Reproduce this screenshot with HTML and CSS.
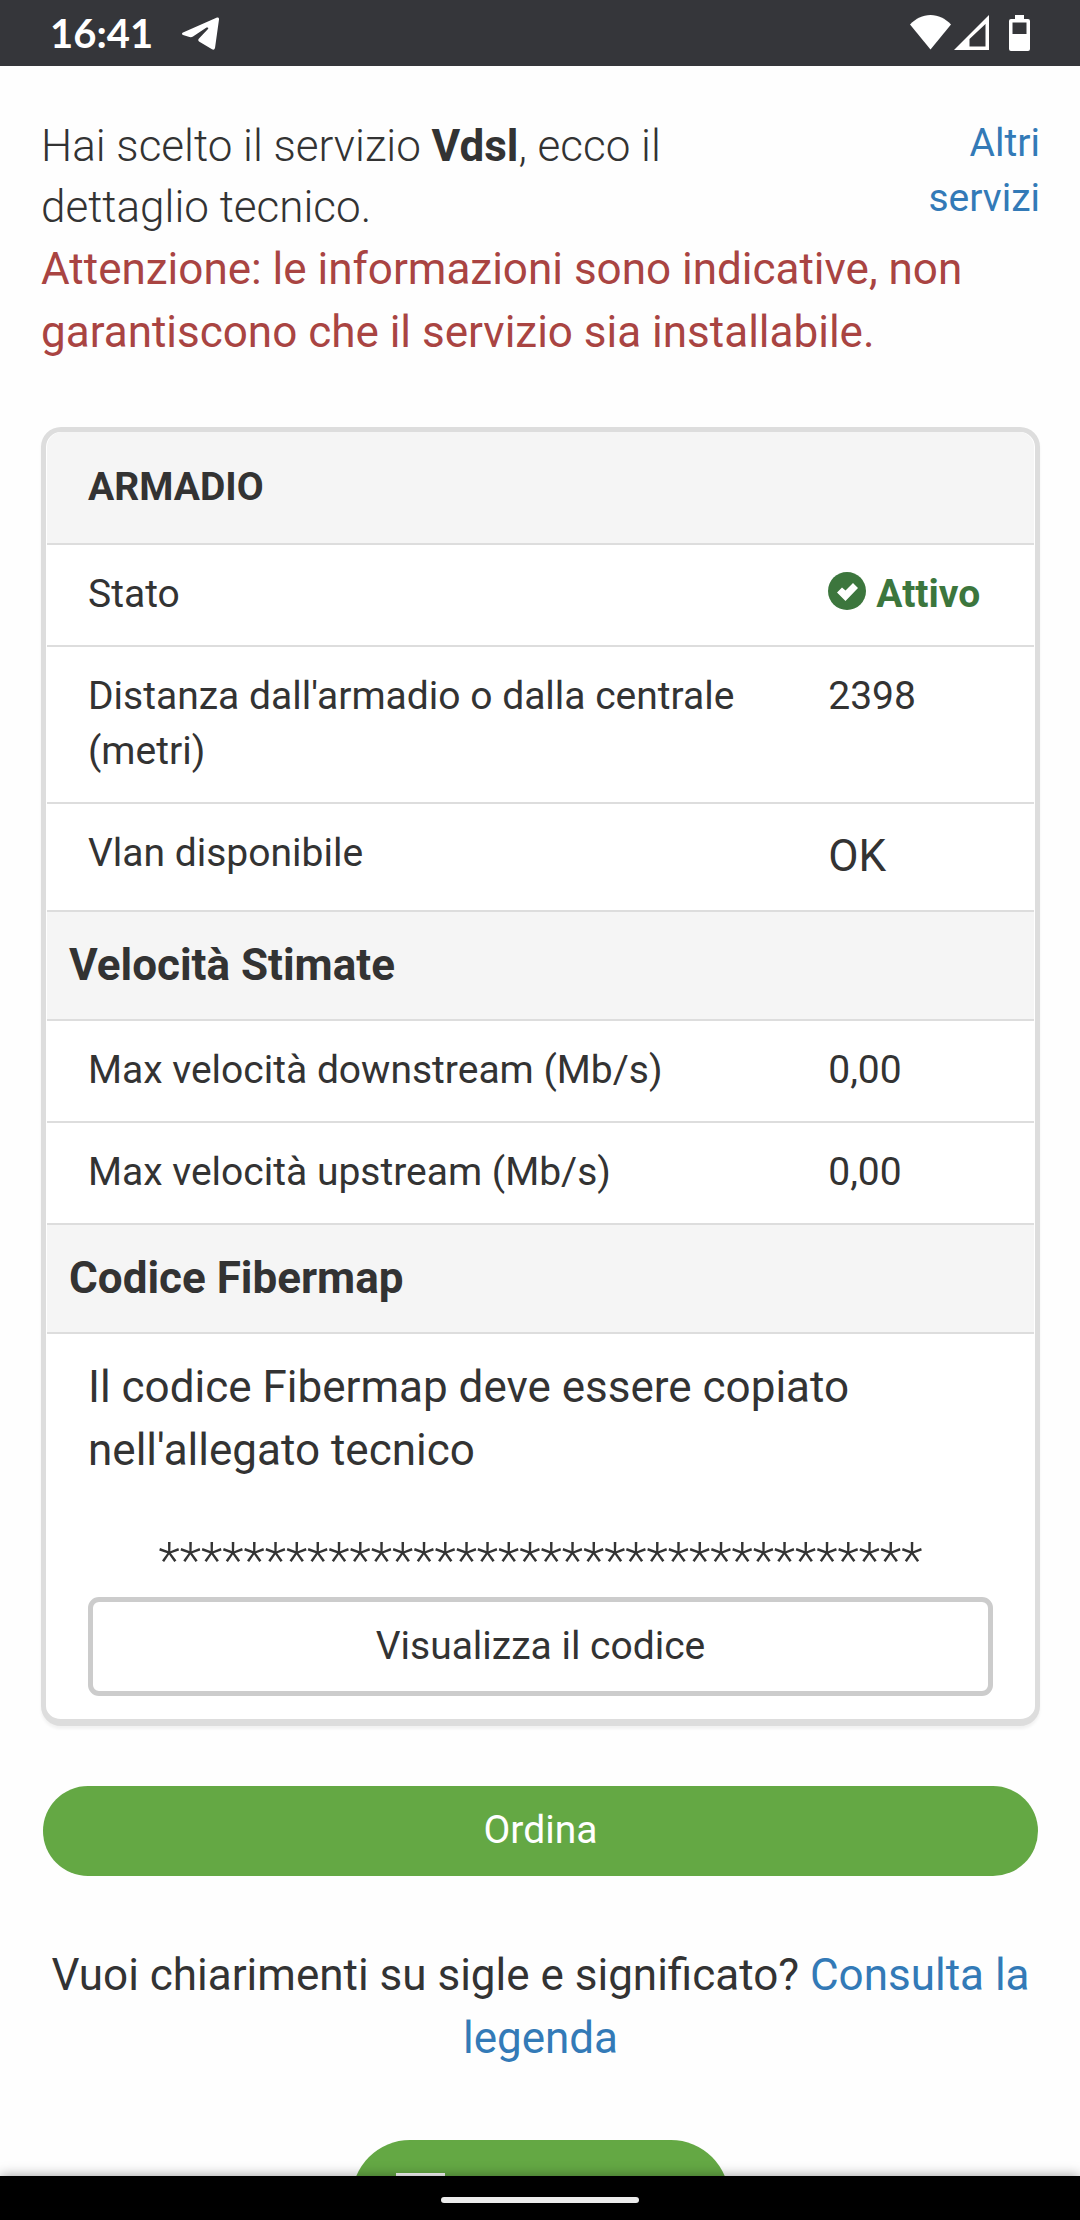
FILE: index.html
```html
<!DOCTYPE html>
<html lang="it">
<head>
    <meta charset="utf-8">
    <meta name="viewport" content="width=device-width, initial-scale=1">
    <title>Dettaglio servizio Vdsl</title>
    <link rel="stylesheet" href="styles.css">
</head>
<body>
    <div class="status-bar">
        <span class="clock">16:41</span>
        <svg class="telegram" width="37" height="33" viewBox="0 0 37 33" fill="#fff">
            <path d="M1 15.500L35 .5Q37.200 0 37 2.500L33 31Q32.300 33.500 30 32.300L17 24.500Q15.500 23 17 21.500L26 12Q27 10 24.500 10.500L11 19.500Q9.500 20.500 7.500 20L1 18Q-1 16.500 1 15.500Z"/>
        </svg>
        <div class="status-icons">
            <svg width="41" height="35" viewBox="0 0 41 35" fill="#fff">
                <path d="M20.500 34.500L0 9.500C6 3.500 12.500 0 20.500 0S35 3.500 41 9.500Z"/>
            </svg>
            <svg width="35" height="35" viewBox="0 0 35 35" fill="#fff">
                <path fill-rule="evenodd" d="M0 35L35 0V35ZM15.500 24V31.500H31.500V9Z"/>
            </svg>
            <svg class="battery" width="21" height="36" viewBox="0 0 21 36" fill="#fff">
                <path fill-rule="evenodd" d="M6 0H15V4H19Q21 4 21 6V34Q21 36 19 36H2Q0 36 0 34V6Q0 4 2 4H6ZM3.500 7.500V19H17.500V7.500Z"/>
            </svg>
        </div>
    </div>

    <main class="content">
        <div class="intro">
            <h1>Hai scelto il servizio <strong>Vdsl</strong>, ecco il dettaglio tecnico.</h1>
            <a href="#servizi">Altri servizi</a>
        </div>
        <p class="warning">Attenzione: le informazioni sono indicative, non garantiscono che il servizio sia installabile.</p>

        <div class="panel">
            <h2>ARMADIO</h2>
            <table>
                <tr>
                    <td class="label">Stato</td>
                    <td class="active">
                        <svg width="38" height="38" viewBox="0 0 38 38">
                            <circle cx="19" cy="19" r="19" fill="#3c763d"/>
                            <path d="M9 20.500L14 15.500L17.500 18.500L25 11L30 16L17.500 29Z" fill="#fff"/>
                        </svg>
                        <strong>Attivo</strong>
                    </td>
                </tr>
                <tr>
                    <td>Distanza dall'armadio o dalla centrale (metri)</td>
                    <td>2398</td>
                </tr>
                <tr>
                    <td>Vlan disponibile</td>
                    <td class="big">OK</td>
                </tr>
                <tr>
                    <th colspan="2">Velocità Stimate</th>
                </tr>
                <tr>
                    <td>Max velocità downstream (Mb/s)</td>
                    <td>0,00</td>
                </tr>
                <tr>
                    <td>Max velocità upstream (Mb/s)</td>
                    <td>0,00</td>
                </tr>
                <tr>
                    <th colspan="2">Codice Fibermap</th>
                </tr>
            </table>
            <div class="fibermap">
                <p>Il codice Fibermap deve essere copiato nell'allegato tecnico</p>
                <div class="code">************************************</div>
                <button type="button" class="show-code">Visualizza il codice</button>
            </div>
        </div>

        <button type="button" class="order">Ordina</button>

        <p class="legend">Vuoi chiarimenti su sigle e significato? <a href="#legenda">Consulta la legenda</a></p>

        <button type="button" class="contact" aria-label="Contatti">
            <svg width="49" height="50" viewBox="0 0 49 50" fill="none" stroke="#fff" stroke-width="4">
                <rect x="2" y="2" width="45" height="46"/>
            </svg>
        </button>
    </main>

    <div class="nav-bar">
        <div class="handle"></div>
    </div>
</body>
</html>
```
FILE: styles.css
```css
* {
    box-sizing: border-box;
}

body {
    margin: 0;
    height: 100vh;
    display: flex;
    flex-direction: column;
    font-family: Roboto, sans-serif;
    font-size: 44px;
    line-height: 63px;
    color: #333;
    background-color: #fefefe;
    overflow: hidden;
}

h1, h2, p {
    margin: 0;
}

a {
    color: #337ab7;
    text-decoration: none;
}

strong {
    font-weight: 700;
}

button {
    display: block;
    font-family: inherit;
    font-size: 39px;
    line-height: 55px;
    cursor: pointer;
}

/* phone status bar */
.status-bar {
    flex: none;
    height: 66px;
    padding: 0 50px;
    display: flex;
    align-items: center;
    background-color: #35363a;
    color: white;
}

.clock {
    font-family: Lato, sans-serif;
    font-size: 40px;
    font-weight: bold;
}

.telegram {
    margin-left: 29px;
}

.status-icons {
    margin-left: auto;
    display: flex;
    gap: 3px;
}

.battery {
    margin-left: 17px;
}

.content {
    flex: 1;
    min-height: 0;
    overflow: hidden;
    padding: 50px 40px 0 41px;
}

.intro {
    display: flex;
    justify-content: space-between;
}

.intro h1 {
    width: 66%;
    font-size: 44px;
    line-height: 61px;
    font-weight: 300;
}

.intro a {
    width: 120px;
    font-size: 39px;
    line-height: 55px;
    text-align: right;
}

.warning {
    color: #a94442;
}

.panel {
    margin-top: 63px;
    padding: 0 1px;
    border: 5px solid #ddd;
    border-bottom-width: 7px;
    border-radius: 20px;
    background-color: white;
    box-shadow: 0 3px 3px rgba(0, 0, 0, 0.05);
}

.panel h2 {
    padding: 28px 41px;
    font-size: 39px;
    line-height: 55px;
    background-color: #f5f5f5;
    border-radius: 15px 15px 0 0;
}

table {
    width: 100%;
    border-collapse: separate;
    border-spacing: 0;
}

td, th {
    border-top: 2px solid #ddd;
    vertical-align: top;
    text-align: left;
}

td {
    padding: 22px 41px 23px;
    font-size: 39px;
    line-height: 55px;
}

th {
    padding: 22px;
    background-color: #f5f5f5;
}

.label {
    width: 75%;
}

.big {
    font-size: 44px;
    line-height: 61px;
}

.active {
    display: flex;
    gap: 10px;
    color: #3c763d;
}

.active svg {
    flex: none;
    margin-top: 5px;
}

.fibermap {
    padding: 22px 41px 23px;
    border-top: 2px solid #ddd;
}

.code {
    margin-top: 48px;
    margin-bottom: 4px;
    font-size: 50px;
    font-weight: 300;
    text-align: center;
    white-space: nowrap;
}

.show-code {
    width: 100%;
    padding: 17px;
    border: 5px solid #ccc;
    border-radius: 11px;
    background-color: white;
    color: #333;
}

.order {
    width: calc(100% - 4px);
    margin: 60px 2px 68px;
    padding: 17px 18px 18px;
    border: none;
    border-radius: 45px;
    background-color: #64a844;
    color: white;
}

.legend {
    text-align: center;
}

.contact {
    margin: 70px auto 0;
    width: 377px;
    height: 116px;
    padding: 0 44px;
    border: none;
    border-radius: 58px;
    background-color: #64a844;
}

.contact svg {
    display: block;
}

/* phone navigation bar */
.nav-bar {
    flex: none;
    height: 44px;
    display: flex;
    align-items: center;
    justify-content: center;
    background-color: black;
    box-shadow: 0 0 12px rgba(0, 0, 0, 0.4);
    z-index: 1;
}

.handle {
    width: 198px;
    height: 6px;
    margin-top: 4px;
    border-radius: 3px;
    background-color: #ebebeb;
}
```
